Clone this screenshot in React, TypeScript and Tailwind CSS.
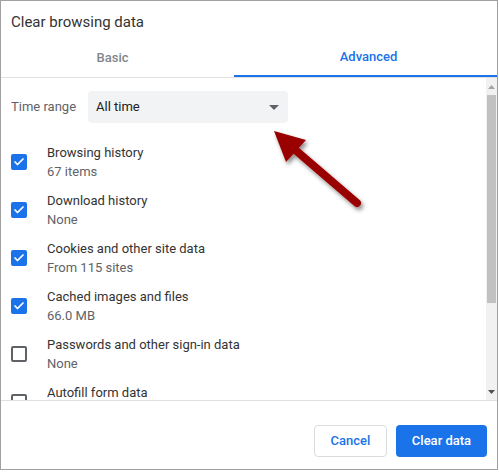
import { Check } from 'lucide-react';

type Item = { title: string; sub: string; checked: boolean };

const items: Item[] = [
  { title: 'Browsing history', sub: '67 items', checked: true },
  { title: 'Download history', sub: 'None', checked: true },
  { title: 'Cookies and other site data', sub: 'From 115 sites', checked: true },
  { title: 'Cached images and files', sub: '66.0 MB', checked: true },
  { title: 'Passwords and other sign-in data', sub: 'None', checked: false },
  { title: 'Autofill form data', sub: '', checked: false },
];

function Box({ checked }: { checked: boolean }) {
  if (checked) {
    return (
      <div className="w-[16px] h-[16px] shrink-0 rounded-[2px] bg-[#1a73e8] flex items-center justify-center">
        <Check size={12} strokeWidth={3.5} color="#fff" />
      </div>
    );
  }
  return <div className="w-[16px] h-[16px] shrink-0 rounded-[2px] border-2 border-[#5f6368]" />;
}

function Row({ item }: { item: Item }) {
  return (
    <div className="h-[48px] shrink-0 flex items-center pl-[10px]">
      <Box checked={item.checked} />
      <div className="ml-[20px] text-[13px] leading-[19px]">
        <div className="text-[#333]">{item.title}</div>
        <div className="text-[#5f6368]">{item.sub || '\u00a0'}</div>
      </div>
    </div>
  );
}

export default function App() {
  return (
    <div className="relative w-[499px] h-[472px] bg-white" style={{ fontFamily: 'Roboto, "Noto Sans", sans-serif' }}>
      <div className="w-[498px] h-[470px] border border-[#a0a0a0] flex flex-col">
        {/* title */}
        <div className="h-[37px] shrink-0 pt-[11px] pl-[10px] text-[15px] leading-[20px] text-[#333]">
          Clear browsing data
        </div>

        {/* tabs */}
        <div className="h-[40px] shrink-0 flex border-b border-[#e0e0e0]">
          <div className="w-[233px] pr-[10px] flex items-center justify-center text-[13px] font-medium text-[#80868b]">
            Basic
          </div>
          <div className="flex-1 pl-[6px] flex items-center justify-center text-[13px] font-medium text-[#1a73e8] border-b-2 border-[#1a73e8]">
            Advanced
          </div>
        </div>

        {/* scrolling body */}
        <div className="h-[322px] shrink-0 flex">
          <div className="flex-1 overflow-hidden flex flex-col">
            <div className="pt-[13px] pl-[10px] flex items-center shrink-0">
              <div className="w-[77px] text-[13px] text-[#5f6368]">Time range</div>
              <div className="w-[200px] h-[32px] rounded-[4px] bg-[#f1f3f4] flex items-center justify-between pl-[8px] pr-[9px]">
                <span className="text-[13px] text-[#202124]">All time</span>
                <svg width="10" height="5" viewBox="0 0 10 5">
                  <path d="M0 0 L10 0 L5 5 Z" fill="#5f6368" />
                </svg>
              </div>
            </div>
            <div className="mt-[15px] flex flex-col">
              {items.map((it) => (
                <Row key={it.title} item={it} />
              ))}
            </div>
          </div>
          {/* scrollbar */}
          <div className="w-[11px] shrink-0 bg-[#f1f1f1] flex flex-col items-center">
            <div className="h-[17px] w-full flex items-center justify-center">
              <svg width="7" height="4" viewBox="0 0 7 4">
                <path d="M0 4 L7 4 L3.5 0 Z" fill="#a3a3a3" />
              </svg>
            </div>
            <div className="w-[9px] h-[208px] bg-[#c1c1c1]" />
            <div className="flex-1" />
            <div className="h-[17px] w-full flex items-center justify-center">
              <svg width="7" height="4" viewBox="0 0 7 4">
                <path d="M0 0 L7 0 L3.5 4 Z" fill="#505050" />
              </svg>
            </div>
          </div>
        </div>

        {/* footer */}
        <div className="flex-1 border-t border-[#e0e0e0] flex justify-end items-start pt-[24px] pr-[10px] gap-[9px]">
          <button className="w-[73px] h-[32px] rounded-[4px] border border-[#dadce0] bg-white text-[13px] font-medium text-[#1a73e8]">
            Cancel
          </button>
          <button className="w-[91px] h-[32px] rounded-[4px] bg-[#1a73e8] text-[13px] font-medium text-white">
            Clear data
          </button>
        </div>
      </div>

      {/* annotation arrow */}
      <svg
        className="absolute left-0 top-0 pointer-events-none"
        width="499"
        height="472"
        viewBox="0 0 499 472"
      >
        <defs>
          <filter id="sh" x="-20%" y="-20%" width="140%" height="140%">
            <feDropShadow dx="2" dy="3" stdDeviation="2" floodColor="#000" floodOpacity="0.45" />
          </filter>
        </defs>
        <g filter="url(#sh)">
          <line x1="293" y1="148" x2="357" y2="203" stroke="#990000" strokeWidth="8" strokeLinecap="round" />
          <path d="M274 131 L306 140 L286 162 Z" fill="#990000" />
        </g>
      </svg>
    </div>
  );
}
